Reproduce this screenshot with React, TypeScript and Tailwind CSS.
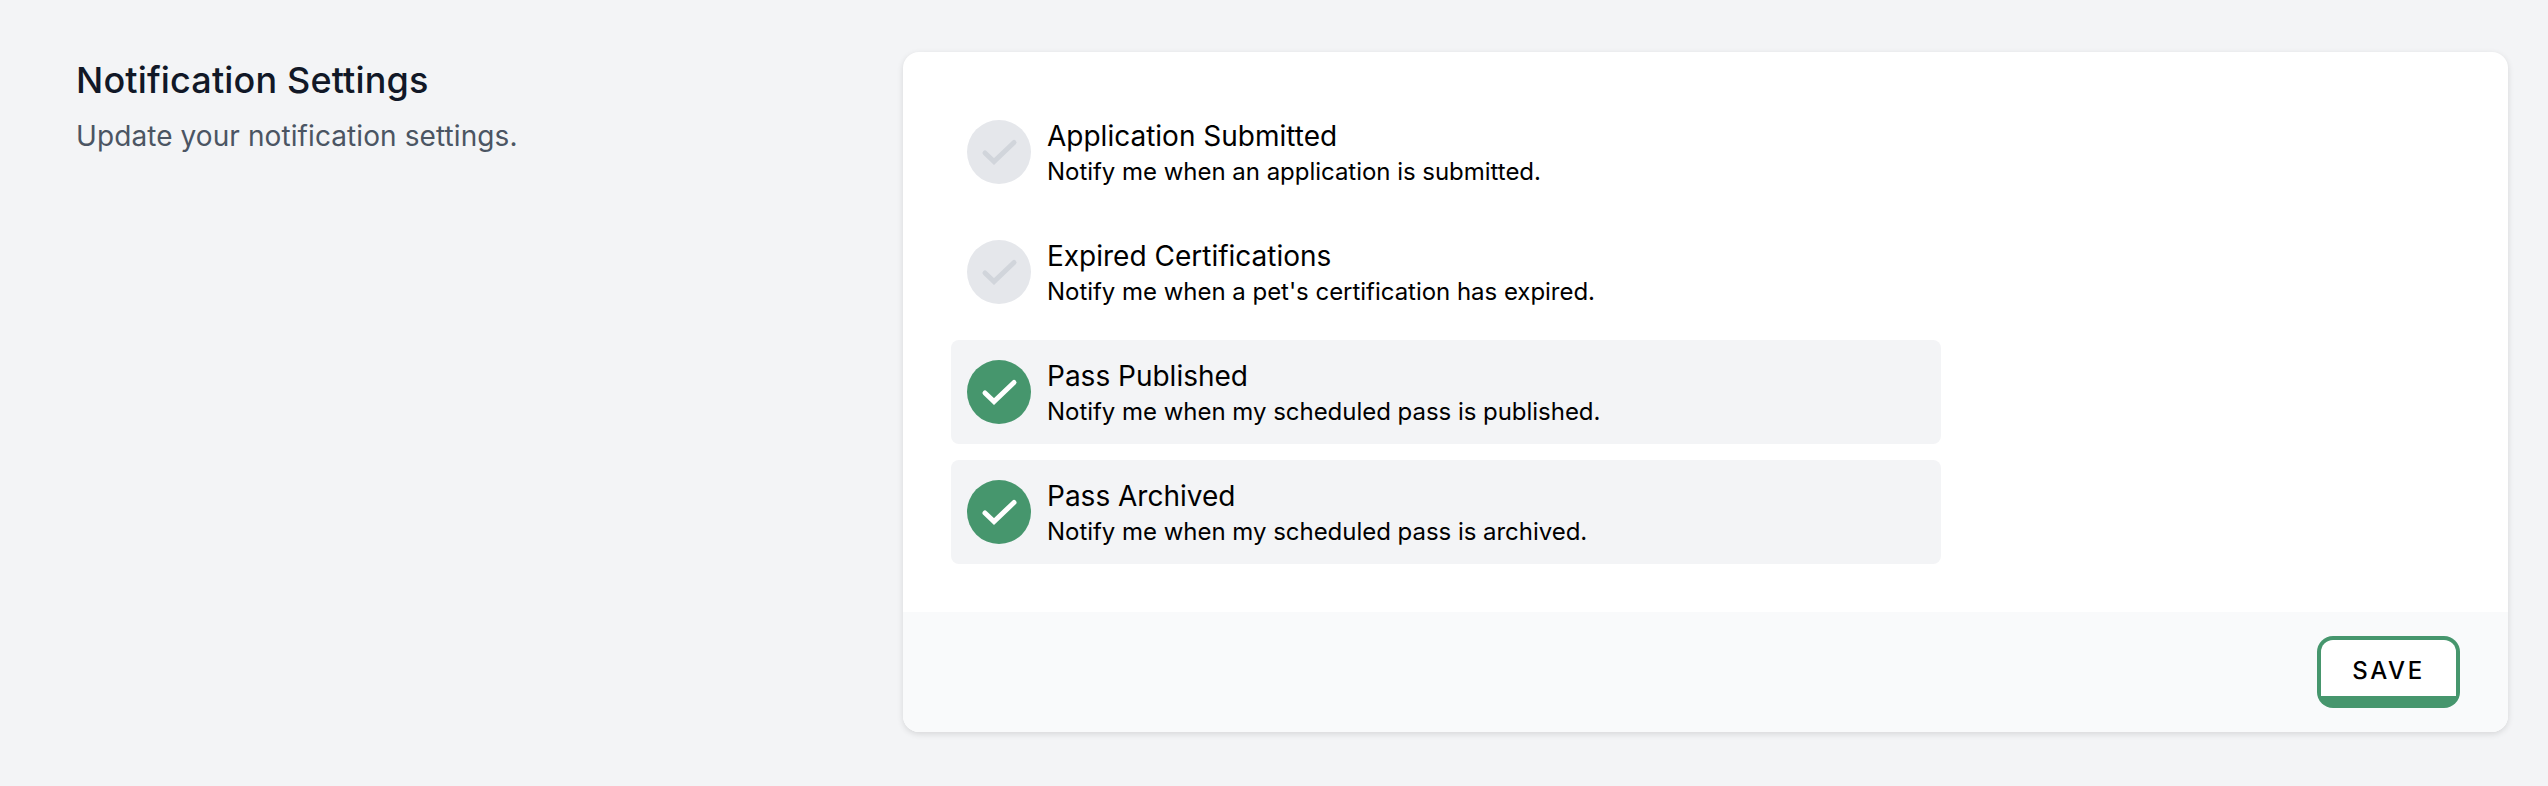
import React from 'react';

interface NotificationRowProps {
    title: string;
    description: string;
    active?: boolean;
}

const NotificationRow: React.FC<NotificationRowProps> = ({title, description, active}) => (
    <div className={`flex items-center gap-4 p-4 rounded-lg ${active ? 'bg-[#f3f4f6]' : ''}`}>
        <div className={`flex w-16 h-16 shrink-0 rounded-full ${active ? 'bg-[#46966d]' : 'bg-[#e5e7eb]'}`}>
            <svg viewBox="0 0 64 64" className="w-16 h-16" fill="none">
                <path
                    d="M18 33L27 41.5L47 22.5"
                    stroke={active ? '#ffffff' : '#d1d5db'}
                    strokeWidth="5"
                    strokeLinecap="round"
                    strokeLinejoin="miter"
                />
            </svg>
        </div>
        <div className="flex flex-col text-black">
            <span className="text-[28px] leading-10">{title}</span>
            <span className="text-2xl leading-8 tracking-[-0.03px]">{description}</span>
        </div>
    </div>
);

export default function App() {
    return (
        <div className="flex w-full h-[786px] pt-[52px] pl-[76px] pr-10 bg-[#f3f4f6] font-['Inter',sans-serif] antialiased [font-optical-sizing:none]">
            <div className="w-[827px] shrink-0">
                <h2 className="text-4xl leading-[56px] font-medium tracking-[0.15px] text-[#111827]">Notification Settings</h2>
                <p className="mt-2 text-[28px] leading-10 tracking-[0.09px] text-[#4b5563]">Update your notification settings.</p>
            </div>
            <div className="flex-1 self-start rounded-2xl bg-white shadow-[0_2px_6px_rgba(0,0,0,0.12)] overflow-hidden">
                <div className="flex flex-col gap-4 p-12">
                    <div className="flex flex-col gap-4 w-[990px]">
                        <NotificationRow title="Application Submitted" description="Notify me when an application is submitted."/>
                        <NotificationRow title="Expired Certifications" description="Notify me when a pet's certification has expired."/>
                        <NotificationRow active title="Pass Published" description="Notify me when my scheduled pass is published."/>
                        <NotificationRow active title="Pass Archived" description="Notify me when my scheduled pass is archived."/>
                    </div>
                </div>
                <div className="flex justify-end px-12 py-6 bg-[#f9fafb]">
                    <button className="flex w-[143px] h-[72px] p-1 pb-3 bg-[#46966d] rounded-2xl">
                        <span className="flex flex-1 items-center justify-center pt-1.5 bg-white rounded-t-xl text-2xl font-[450] tracking-[0.11em] text-black">
                            SAVE
                        </span>
                    </button>
                </div>
            </div>
        </div>
    );
}
